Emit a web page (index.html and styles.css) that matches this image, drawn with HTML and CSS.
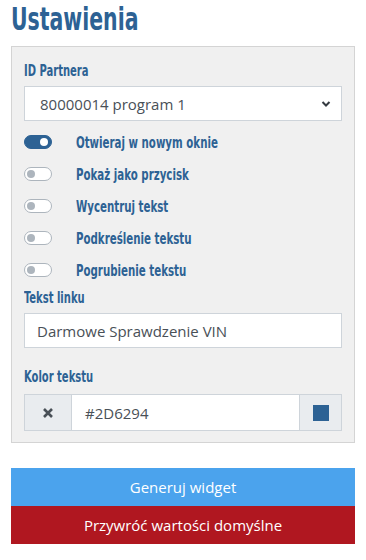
FILE: index.html
```html
<!DOCTYPE html>
<html lang="pl">
<head>
    <meta charset="UTF-8" />
    <meta name="viewport" content="width=device-width, initial-scale=1.0">
    <title>Ustawienia</title>
    <link rel="stylesheet" href="styles.css">
</head>
<body>
    <div class="page">
        <h1 class="title"><span>Ustawienia</span></h1>

        <div class="panel">
            <label class="field-label"><span>ID Partnera</span></label>
            <div class="select">
                <span>80000014 program 1</span>
                <svg class="chevron" width="10" height="8" viewBox="0 0 10 8">
                    <path d="M1.5 2 L5 5.5 L8.5 2" fill="none" stroke="#343a40" stroke-width="2"/>
                </svg>
            </div>

            <div class="switches">
                <div class="switch-row">
                    <span class="switch on"></span>
                    <span class="switch-label">Otwieraj w nowym oknie</span>
                </div>
                <div class="switch-row">
                    <span class="switch"></span>
                    <span class="switch-label">Pokaż jako przycisk</span>
                </div>
                <div class="switch-row">
                    <span class="switch"></span>
                    <span class="switch-label">Wycentruj tekst</span>
                </div>
                <div class="switch-row">
                    <span class="switch"></span>
                    <span class="switch-label">Podkreślenie tekstu</span>
                </div>
                <div class="switch-row">
                    <span class="switch"></span>
                    <span class="switch-label">Pogrubienie tekstu</span>
                </div>
            </div>

            <label class="field-label"><span>Tekst linku</span></label>
            <div class="input">Darmowe Sprawdzenie VIN</div>

            <label class="field-label color-label"><span>Kolor tekstu</span></label>
            <div class="input-group">
                <span class="addon clear">
                    <svg width="12" height="12" viewBox="0 0 12 12">
                        <path d="M2 2 L10 10 M10 2 L2 10" stroke="#495057" stroke-width="2.6"/>
                    </svg>
                </span>
                <div class="input grouped">#2D6294</div>
                <span class="addon"><span class="swatch"></span></span>
            </div>
        </div>

        <div class="actions">
            <button class="btn btn-generate">Generuj widget</button>
            <button class="btn btn-reset">Przywróć wartości domyślne</button>
        </div>
    </div>
</body>
</html>
```

FILE: styles.css
```css
body {
    margin: 0;
    padding: 0;
    background-color: #fff;
    font-family: 'Open Sans', 'Noto Sans', Arial, sans-serif;
}

.page {
    padding: 0 11px;
}

/* naglowki w waskim kroju - sciskamy w poziomie */
.title {
    margin: 0;
    font-family: 'DejaVu Sans Condensed', sans-serif;
    font-stretch: condensed;
    font-size: 32px;
    line-height: 38px;
    font-weight: bold;
    color: #2d6294;
}

.title span {
    display: inline-block;
    transform: scaleX(0.71);
    transform-origin: left center;
}

.panel {
    margin-top: 8px;
    padding: 14px 12px 11px 12px;
    background-color: #f0f0f0;
    border: 1px solid #d4d4d4;
}

.field-label {
    display: block;
    font-family: 'DejaVu Sans Condensed', sans-serif;
    font-stretch: condensed;
    font-size: 15px;
    line-height: 20px;
    font-weight: bold;
    color: #2d6294;
    margin-bottom: 5px;
}

.field-label span {
    display: inline-block;
    transform: scaleX(0.74);
    transform-origin: left center;
}

.select,
.input {
    height: 35px;
    box-sizing: border-box;
    border: 1px solid #ced4da;
    background-color: #fff;
    color: #495057;
    font-size: 15px;
    display: flex;
    align-items: center;
    padding: 0 12px;
}

.select {
    justify-content: space-between;
    padding-left: 15px;
    padding-right: 10px;
}

.switches {
    padding-top: 5px;
    padding-bottom: 2px;
}

.switch-row {
    display: flex;
    align-items: center;
    height: 32px;
}

.switch {
    position: relative;
    width: 28px;
    height: 14px;
    box-sizing: border-box;
    border: 1px solid #adb5bd;
    border-radius: 7px;
    background-color: #fff;
    margin-right: 24px;
}

.switch::after {
    content: '';
    position: absolute;
    top: 2px;
    left: 2px;
    width: 8px;
    height: 8px;
    border-radius: 50%;
    background-color: #adb5bd;
}

.switch.on {
    background-color: #2d6294;
    border-color: #2d6294;
}

.switch.on::after {
    left: 15px;
    background-color: #fff;
}

.switch-label {
    display: inline-block;
    font-family: 'DejaVu Sans Condensed', sans-serif;
    font-stretch: condensed;
    font-size: 16.5px;
    font-weight: bold;
    color: #2d6294;
    transform: scaleX(0.69);
    transform-origin: left center;
}

.input {
    margin-bottom: 19px;
}

.color-label {
    margin-bottom: 7px;
}

.input-group {
    display: flex;
    height: 37px;
}

.addon {
    display: flex;
    align-items: center;
    justify-content: center;
    width: 46px;
    box-sizing: border-box;
    border: 1px solid #ced4da;
    background-color: #e9ecef;
}

.addon.clear {
    width: 47px;
    border-right: none;
}

.input.grouped {
    flex: 1;
    height: 37px;
    margin: 0;
    padding-left: 13px;
}

.addon:last-child {
    width: 42px;
    border-left: none;
}

.swatch {
    width: 16px;
    height: 16px;
    background-color: #2d6294;
}

.actions {
    margin-top: 25px;
}

.btn {
    display: block;
    width: 100%;
    height: 38px;
    border: none;
    font-family: 'Open Sans', 'Noto Sans', Arial, sans-serif;
    font-size: 15px;
    color: #fff;
    cursor: pointer;
}

.btn-generate {
    background-color: #4ba3ed;
}

.btn-reset {
    background-color: #b01720;
}
```
